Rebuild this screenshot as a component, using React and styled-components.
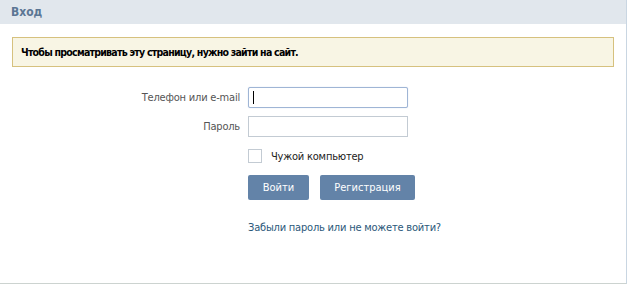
import React from "react";
import styled, { createGlobalStyle } from "styled-components";

const Global = createGlobalStyle`
  html, body { margin: 0; padding: 0; background: #fff; }
  body { font-family: "DejaVu Sans Condensed", "DejaVu Sans", Tahoma, sans-serif; font-size: 11px; letter-spacing: -0.2px; }
  * { box-sizing: border-box; }
`;

const Page = styled.div`
  width: 627px;
  height: 284px;
  border-right: 1px solid #c9d6e2;
  border-bottom: 1px solid #ccd3d0;
  background: #fff;
`;

const Header = styled.div`
  height: 24px;
  background: #e1e7ed;
  display: flex;
  align-items: center;
  padding-left: 11px;
  font-weight: bold;
  font-size: 12px;
  letter-spacing: 0;
  color: #5b7694;
`;

const Content = styled.div`
  padding: 13px 12px 0 12px;
`;

const Notice = styled.div`
  height: 30px;
  border: 1px solid #d6c17e;
  background: #f8f5e4;
  display: flex;
  align-items: center;
  padding-left: 8px;
  font-weight: bold;
  font-size: 10.5px;
  letter-spacing: -0.75px;
  color: #000;
`;

const Form = styled.div`
  margin-top: 20px;
  display: grid;
  grid-template-columns: 228px 160px;
  column-gap: 8px;
  align-items: center;
`;

const Label = styled.div`
  text-align: right;
  color: #555;
  height: 21px;
  line-height: 21px;
  margin-bottom: ${(p) => p.$mb || 0}px;
`;

const Field = styled.div`
  position: relative;
  height: 21px;
  margin-bottom: ${(p) => p.$mb || 0}px;
`;

const Input = styled.input`
  display: block;
  width: 160px;
  height: 21px;
  margin: 0;
  padding: 0 4px;
  font: inherit;
  outline: none;
  background: #fff;
  border: 1px solid ${(p) => (p.$focus ? "#9fb5d5" : "#c3cbd3")};
  border-radius: ${(p) => (p.$focus ? "2px" : "0")};
  box-shadow: ${(p) => (p.$focus ? "0 0 1px #b9cbe4" : "none")};
`;

const Caret = styled.span`
  position: absolute;
  left: 5px;
  top: 4px;
  width: 1px;
  height: 13px;
  background: #000;
`;

const Spacer = styled.div``;

const CheckRow = styled.label`
  display: flex;
  align-items: center;
  gap: 9px;
  margin-top: 12px;
  color: #222;
  white-space: nowrap;
`;

const Box = styled.span`
  width: 14px;
  height: 14px;
  border: 1px solid #c3cbd3;
  background: #fff;
`;

const Buttons = styled.div`
  display: flex;
  gap: 11px;
  margin-top: 12px;
  white-space: nowrap;
`;

const Button = styled.button`
  flex: 0 0 auto;
  width: ${(p) => p.$w}px;
  height: 25px;
  border: none;
  border-radius: 2px;
  background: #6383a8;
  color: #fff;
  font: inherit;
  padding: 0;
`;

const Link = styled.a`
  display: block;
  margin-top: 21px;
  color: #2b587a;
  text-decoration: none;
  white-space: nowrap;
`;

export default function App() {
  return (
    <>
      <Global />
      <Page>
        <Header>Вход</Header>
        <Content>
          <Notice>Чтобы просматривать эту страницу, нужно зайти на сайт.</Notice>
          <Form>
            <Label $mb={8}>Телефон или e-mail</Label>
            <Field $mb={8}>
              <Input $focus />
              <Caret />
            </Field>
            <Label>Пароль</Label>
            <Field>
              <Input type="password" />
            </Field>
            <Spacer />
            <CheckRow>
              <Box />
              Чужой компьютер
            </CheckRow>
            <Spacer />
            <Buttons>
              <Button $w={61}>Войти</Button>
              <Button $w={95}>Регистрация</Button>
            </Buttons>
            <Spacer />
            <Link href="#">Забыли пароль или не можете войти?</Link>
          </Form>
        </Content>
      </Page>
    </>
  );
}
